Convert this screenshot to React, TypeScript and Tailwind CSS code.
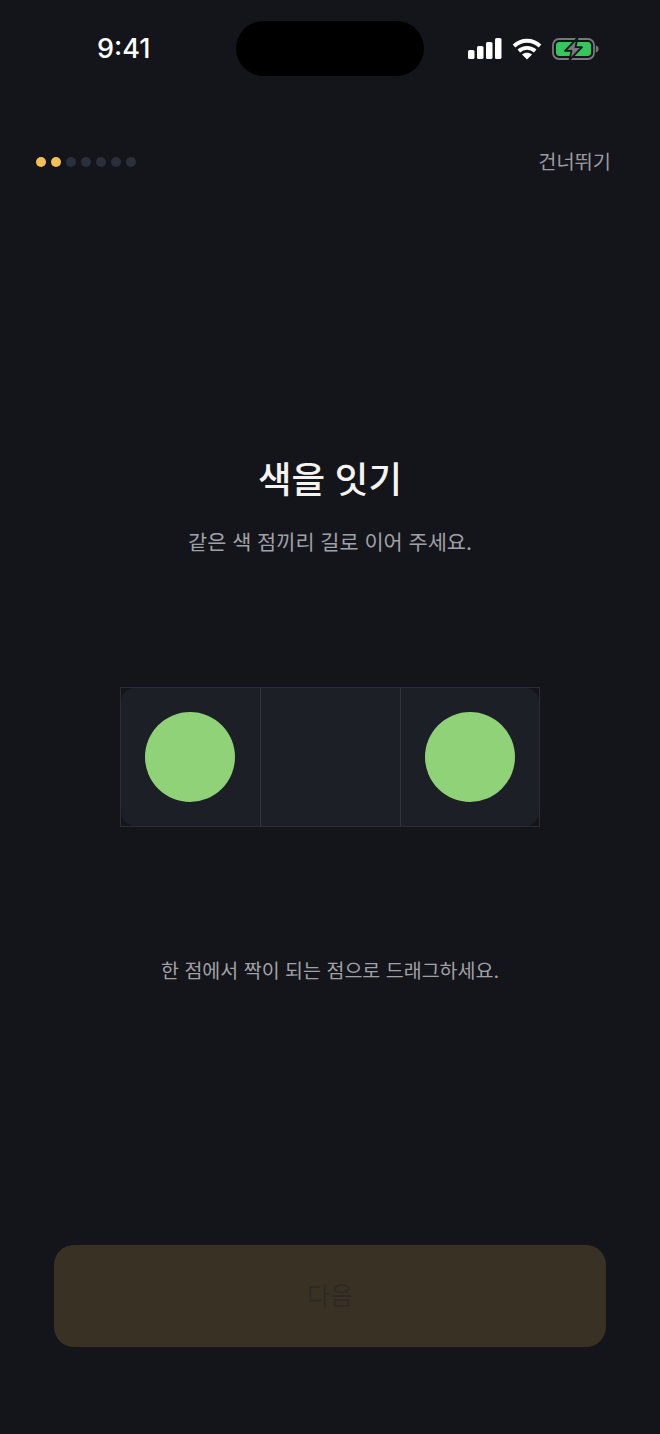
const FONT = "font-['Inter','Noto_Sans_CJK_KR',sans-serif]";

function StatusIcons() {
  return (
    <div className="flex items-center">
      <svg width="34" height="21" viewBox="0 0 34 21" fill="#ffffff">
        <rect x="0" y="12" width="6.5" height="9" rx="1.6" />
        <rect x="9" y="8" width="6.5" height="13" rx="1.6" />
        <rect x="18" y="4" width="6.5" height="17" rx="1.6" />
        <rect x="27" y="0" width="6.5" height="21" rx="1.6" />
      </svg>
      <svg className="ml-[10px]" width="30" height="22" viewBox="0 0 30 22" fill="none" stroke="#ffffff" strokeWidth="3.8">
        <path d="M2 8C9.4 1 20.6 1 28 8" />
        <path d="M6.8 13C11.4 8.8 18.6 8.8 23.2 13" />
        <path d="M15 21.6l-5-5.2c2.8-2.2 7.2-2.2 10 0z" fill="#ffffff" stroke="none" />
      </svg>
      <svg className="ml-[10px]" width="47" height="24" viewBox="0 0 47 24" fill="none">
        <rect x="1" y="2" width="41" height="20" rx="6" stroke="#77787c" strokeWidth="1.8" />
        <rect x="4" y="5" width="35" height="14" rx="3.4" fill="#34c759" />
        <path d="M43.8 8.6c1.9.5 2.8 1.8 2.8 3.4s-.9 2.9-2.8 3.4z" fill="#77787c" />
        <path d="M25.5 1 13 13.8h6.5L17.5 23 30 10.2h-6.5z" fill="#77787c" stroke="#16171c" strokeWidth="1.8" strokeLinejoin="round" />
      </svg>
    </div>
  );
}

function Dots() {
  const steps = [true, true, false, false, false, false, false];
  return (
    <div className="flex gap-[5.5px]">
      {steps.map((done, i) => (
        <span
          key={i}
          className={done ? "size-[9.5px] rounded-full bg-[#f4bf57]" : "size-[9.5px] rounded-full bg-[#2a303b]"}
        />
      ))}
    </div>
  );
}

export default function App() {
  return (
    <div className={`${FONT} flex h-[1434px] w-[660px] flex-col overflow-hidden bg-[#14151a]`}>
      <div className="flex items-center pt-[21px] pl-[97px]">
        <span className="w-[139px] text-[27px] leading-[55px] font-medium text-white">9:41</span>
        <div className="h-[55px] w-[188px] rounded-full bg-black" />
        <div className="ml-[44px]">
          <StatusIcons />
        </div>
      </div>

      <div className="mt-[72px] flex items-center justify-between pl-[36px] pr-[49px]">
        <Dots />
        <button className="text-[19.8px] leading-[28px] text-[#9a9ba1]">건너뛰기</button>
      </div>

      <h1 className="mt-[279px] text-center text-[36.5px] leading-[50px] font-medium text-[#f5f4f0]">색을 잇기</h1>
      <p className="mt-[23px] text-center text-[20.8px] leading-[30px] text-[#a0a1a7]">같은 색 점끼리 길로 이어 주세요.</p>

      <div className="mx-auto mt-[129px] grid h-[140px] w-[420px] grid-cols-[140px_140px_138px] border border-[#2a2d35] bg-[#14151a]">
        <div className="flex items-center justify-center rounded-l-[14px] border-r border-[#33363e] bg-[#1d1f27] pr-[1px]">
          <span className="size-[90px] rounded-full bg-[#90d277]" />
        </div>
        <div className="border-r border-[#33363e] bg-[#1d1f27]" />
        <div className="flex items-center justify-center rounded-r-[14px] bg-[#1d1f27]">
          <span className="size-[90px] rounded-full bg-[#90d277]" />
        </div>
      </div>

      <p className="mt-[129px] text-center text-[19.5px] leading-[30px] text-[#a0a1a7]">한 점에서 짝이 되는 점으로 드래그하세요.</p>

      <button className="mx-auto mt-[259px] h-[102px] w-[552px] rounded-[20px] bg-[#3a3125] pt-[2px] text-[25px] text-[#2d2a24]">
        다음
      </button>
    </div>
  );
}
